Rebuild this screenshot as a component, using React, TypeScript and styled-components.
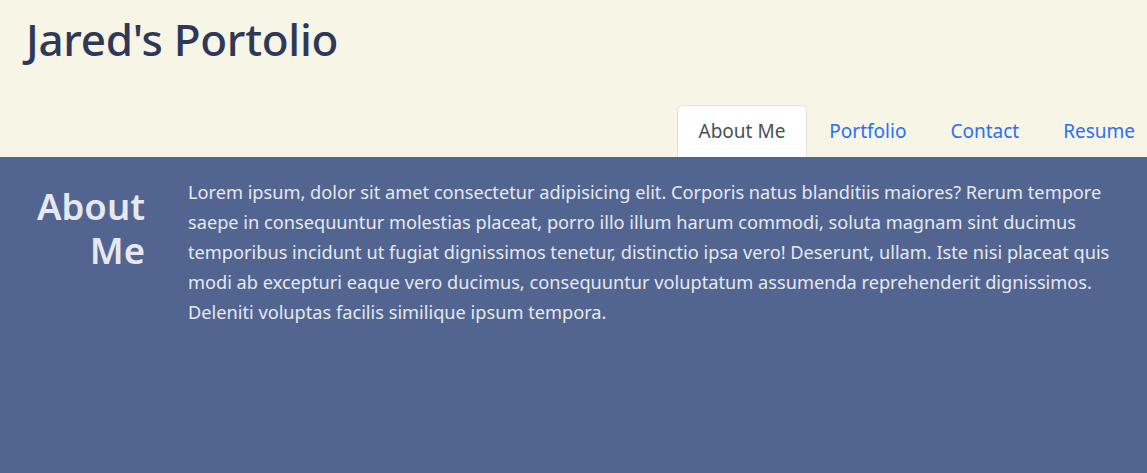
import React from "react";
import styled, { createGlobalStyle } from "styled-components";

const GlobalStyle = createGlobalStyle`
  html, body {
    margin: 0;
    padding: 0;
    height: 100%;
    background: #516590;
  }
  body {
    font-family: "Noto Sans", "Open Sans", sans-serif;
    overflow: hidden;
  }
`;

const Header = styled.header`
  background: #f7f5e6;
  height: 157px;
  display: flex;
  flex-direction: column;
  justify-content: space-between;
`;

const Title = styled.h1`
  margin: 0;
  padding: 7px 0 0 26px;
  font-size: 44px;
  line-height: 64px;
  font-weight: 500;
  color: #2f3857;
  letter-spacing: -0.3px;
`;

const Tabs = styled.nav`
  display: flex;
  justify-content: flex-end;
  align-items: flex-end;
  margin-right: -10px;
`;

const Tab = styled.a<{ $active?: boolean }>`
  display: block;
  padding: 13px 21px 14px;
  font-size: 19px;
  line-height: 24px;
  text-decoration: none;
  border: 1px solid ${(p) => (p.$active ? "#dee2e6" : "transparent")};
  border-bottom: none;
  border-radius: 6px 6px 0 0;
  background: ${(p) => (p.$active ? "#ffffff" : "transparent")};
  color: ${(p) => (p.$active ? "#495057" : "#2b6ff6")};
  cursor: pointer;
`;

const Main = styled.main`
  display: grid;
  grid-template-columns: 145px 1fr;
  column-gap: 43px;
  padding: 20px 8px 0 0;
  color: #e7e8ef;
`;

const Heading = styled.h2`
  margin: 7px 0 0;
  text-align: right;
  font-size: 36.5px;
  line-height: 44px;
  font-weight: 600;
`;

const Text = styled.p`
  margin: 0;
  font-size: 18.2px;
  line-height: 30px;
`;

const tabs = ["About Me", "Portfolio", "Contact", "Resume"];

export default function App() {
  return (
    <>
      <GlobalStyle />
      <Header>
        <Title>Jared's Portolio</Title>
        <Tabs>
          {tabs.map((t, i) => (
            <Tab key={t} $active={i === 0}>
              {t}
            </Tab>
          ))}
        </Tabs>
      </Header>
      <Main>
        <Heading>
          About
          <br />
          Me
        </Heading>
        <Text>
          Lorem ipsum, dolor sit amet consectetur adipisicing elit. Corporis
          natus blanditiis maiores? Rerum tempore saepe in consequuntur
          molestias placeat, porro illo illum harum commodi, soluta magnam sint
          ducimus temporibus incidunt ut fugiat dignissimos tenetur, distinctio
          ipsa vero! Deserunt, ullam. Iste nisi placeat quis modi ab excepturi
          eaque vero ducimus, consequuntur voluptatum assumenda reprehenderit
          dignissimos. Deleniti voluptas facilis similique ipsum tempora.
        </Text>
      </Main>
    </>
  );
}
